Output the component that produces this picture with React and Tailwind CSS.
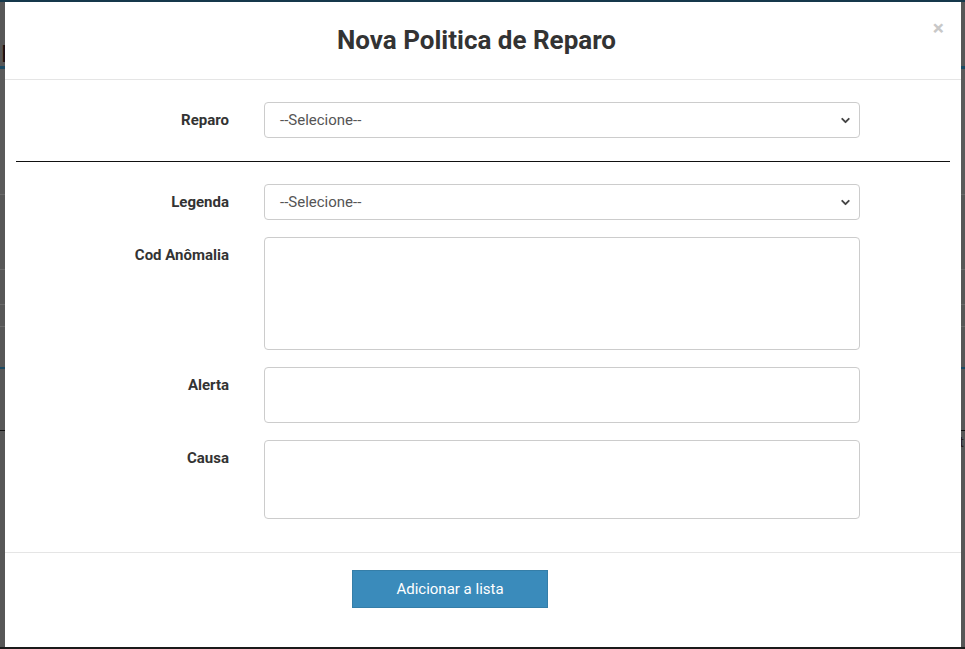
import { ChevronDown } from "lucide-react";

const font = { fontFamily: "Roboto, 'Noto Sans', sans-serif" };

function SelectField() {
  return (
    <div className="relative h-[36px] w-[596px] rounded-[4px] border border-[#cccccc] bg-white">
      <div className="flex h-full items-center pl-[15px] text-[15px] text-[#555555]">
        --Selecione--
      </div>
      <ChevronDown
        className="absolute right-[7px] top-[11px] h-[13px] w-[13px] text-[#444444]"
        strokeWidth={3.5}
      />
    </div>
  );
}

function TextField({ height }) {
  return (
    <div
      className="w-[596px] rounded-[4px] border border-[#cccccc] bg-white"
      style={{ height }}
    />
  );
}

function Row({ label, children }) {
  return (
    <div className="flex">
      <div className="flex h-[36px] w-[224px] items-center justify-end text-[15px] font-bold text-[#333333]">
        {label}
      </div>
      <div className="ml-[35px]">{children}</div>
    </div>
  );
}

export default function App() {
  return (
    <div className="relative h-[649px] w-[965px] overflow-hidden bg-[#575757]" style={font}>
      {/* page behind the overlay */}
      <div className="flex h-full flex-col">
        <div className="h-[2px] bg-[#15384b]" />
        <div className="h-[40px]" />
        <div className="h-[24px] pl-[1px] text-[24px] leading-[24px] text-[#1a0f0f]">P</div>
        <div className="h-[3px] bg-[#1b4a63]" />
        <div className="h-[125px] bg-[#5a5a5a]" />
        <div className="h-[1px] bg-[#6a6a6a]" />
        <div className="h-[74px]" />
        <div className="h-[1px] bg-[#6a6a6a]" />
        <div className="h-[34px]" />
        <div className="h-[1px] bg-[#6a6a6a]" />
        <div className="h-[21px]" />
        <div className="h-[1px] bg-[#6a6a6a]" />
        <div className="h-[40px]" />
        <div className="h-[2px] bg-[#1b4a63]" />
        <div className="h-[61px]" />
        <div className="h-[1px] bg-[#111111]" />
        <div className="flex h-[40px] justify-end pr-[1px] text-[15px] text-[#2a1a1a]">t</div>
        <div className="flex-1" />
        <div className="h-[2px] bg-[#1a1a1a]" />
      </div>

      {/* modal */}
      <div className="absolute left-[5px] top-[2px] flex h-[645px] w-[956px] flex-col bg-white">
        <div className="relative flex h-[78px] items-center justify-center border-b border-[#e5e5e5] pr-[13px]">
          <h3 className="text-[26px] font-bold text-[#333333]">Nova Politica de Reparo</h3>
          <span className="absolute right-[17px] top-[14px] text-[21px] font-bold leading-[24px] text-[#c8c8c8]">
            ×
          </span>
        </div>

        <div className="flex flex-col pt-[22px]">
          <Row label="Reparo">
            <SelectField />
          </Row>
          <div className="mx-[11px] mb-[22px] mt-[23px] h-[1px] bg-[#111111]" />
          <div className="flex flex-col gap-[17px]">
            <Row label="Legenda">
              <SelectField />
            </Row>
            <Row label="Cod Anômalia">
              <TextField height={113} />
            </Row>
            <Row label="Alerta">
              <TextField height={56} />
            </Row>
            <Row label="Causa">
              <TextField height={79} />
            </Row>
          </div>
        </div>

        <div className="mt-[33px] border-t border-[#e5e5e5] pl-[347px] pt-[17px]">
          <button className="h-[38px] w-[196px] border border-[#357ea8] bg-[#3a8bbb] text-[15px] text-white">
            Adicionar a lista
          </button>
        </div>
      </div>
    </div>
  );
}
